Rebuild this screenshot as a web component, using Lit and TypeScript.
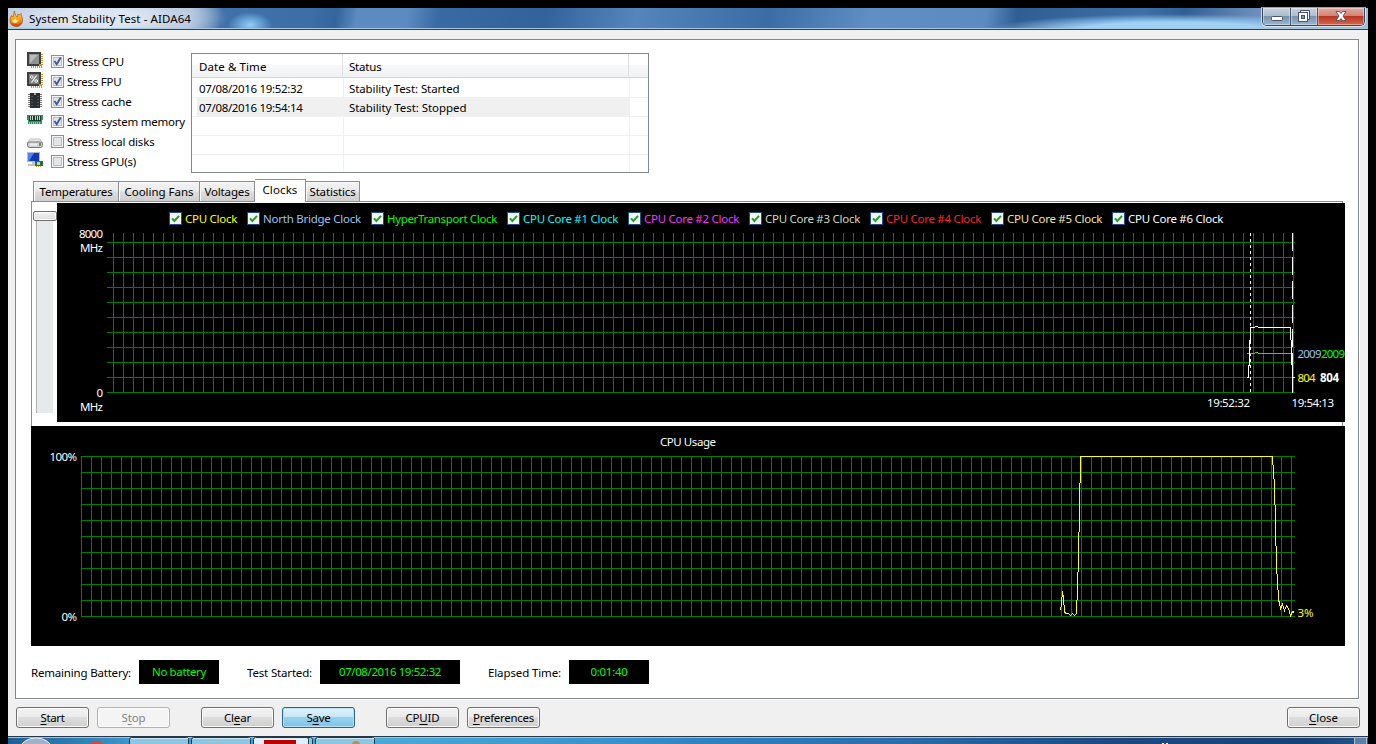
import { LitElement, html, svg, css } from "lit";
import { customElement, property } from "lit/decorators.js";

/** A single line of text whose tracking is adjusted to span an exact width. */
@customElement("ui-text")
class UiText extends LitElement {
  @property({ type: Number }) w = 0;
  @property() text = "";
  /** Index of the underlined access key, or -1. */
  @property({ type: Number }) key = -1;

  static styles = css`
    :host { display: block; flex: none; white-space: pre; line-height: 16px; height: 16px; }
    u { text-decoration: underline; text-decoration-thickness: 1px; text-underline-offset: 2px; text-decoration-skip-ink: none; }
  `;

  updated() {
    const span = this.renderRoot.querySelector("span") as HTMLElement;
    span.style.letterSpacing = "0";
    const natural = span.getBoundingClientRect().width;
    span.style.letterSpacing = `${(this.w - natural) / this.text.length}px`;
    this.style.width = `${this.w}px`;
  }

  render() {
    const { text, key } = this;
    return key < 0
      ? html`<span>${text}</span>`
      : html`<span>${text.slice(0, key)}<u>${text[key]}</u>${text.slice(key + 1)}</span>`;
  }
}

const pins = (color: string) => svg`
  <path d="M4 14.5H16M14.5 2V14" stroke=${color} stroke-width="3" stroke-dasharray="1 1" fill="none"/>`;

const icons = {
  cpu: svg`${pins("#c79436")}<rect width="14" height="14" fill="#3c3e40"/><rect x="2" y="2" width="10" height="10" fill="#8f9294"/><path d="M3 3h8L3 11z" fill="#b9bbbc"/><rect x="12" y="12" width="2" height="2" fill="#d69a2e"/>`,
  fpu: svg`${pins("#c79436")}<rect width="14" height="14" fill="#3c3e40"/><rect x="2" y="2" width="10" height="10" fill="#7c7e80"/><circle cx="4.7" cy="5" r="1.3" fill="none" stroke="#fff"/><circle cx="9.2" cy="9" r="1.3" fill="none" stroke="#fff"/><path d="M9.5 3.5L4.5 10.5" stroke="#fff" stroke-width="1.2"/><rect x="12" y="12" width="2" height="2" fill="#d69a2e"/>`,
  cache: svg`<path d="M2 2V16M14 2V16" stroke="#777" stroke-width="2" stroke-dasharray="1 1"/><rect x="3" y="1" width="10" height="15" fill="#2c2e30"/><path d="M5 4V14M11 4V14" stroke="#777" stroke-dasharray="1 2"/><path d="M7 1h2v2H7z" fill="#aaa"/>`,
  memory: svg`<path d="M0 3h16v5h-1v4H1V8H0z" fill="#2e9464"/><path d="M2 4h12v5H2z" fill="#1d3c2e"/><path d="M3.500 4V8M5.500 4V8M8.500 4V8M10.500 4V8M12.500 4V8" stroke="#c9d8ce"/><path d="M2 11H14" stroke="#e3b23c" stroke-width="2" stroke-dasharray="1 1"/>`,
  disk: svg`<path d="M3 7h10l3 4H0z" fill="#e2e4e5" stroke="#aaa" stroke-width=".6"/><rect x=".5" y="10" width="15" height="5.500" rx="2" fill="#d0d2d4" stroke="#777"/><path d="M3 12.500h7" stroke="#eee" stroke-width="2"/><rect x="12" y="11" width="2" height="3" fill="#52a52f"/>`,
  gpu: svg`<rect x=".5" y=".5" width="12" height="9" fill="#1238b4" stroke="#b5bcc6"/><path d="M1 1h6L2 9H1z" fill="#4f83ee"/><path d="M5 10h3v2h3v2H1v-2h4z" fill="#bfc3c8"/><path d="M8 9h8v5H8z" fill="#1f7048"/><path d="M10 10h3v3h-3z" fill="#bcd0c2"/><path d="M9 14.5h6" stroke="#d8b13c" stroke-dasharray="1 1"/>`,
};

const tests: [string, keyof typeof icons, boolean, number][] = [
  ["Stress CPU", "cpu", true, 57],
  ["Stress FPU", "fpu", true, 54.5],
  ["Stress cache", "cache", true, 64.5],
  ["Stress system memory", "memory", true, 118],
  ["Stress local disks", "disk", false, 87.5],
  ["Stress GPU(s)", "gpu", false, 69],
];

const series: [string, string, number][] = [
  ["CPU Clock", "#ffff00", 52],
  ["North Bridge Clock", "#99c4f5", 98],
  ["HyperTransport Clock", "#00ff00", 110],
  ["CPU Core #1 Clock", "#00ffff", 95],
  ["CPU Core #2 Clock", "#ff35ff", 95],
  ["CPU Core #3 Clock", "#c8dcc0", 95],
  ["CPU Core #4 Clock", "#ff2525", 95],
  ["CPU Core #5 Clock", "#f5e3a0", 95],
  ["CPU Core #6 Clock", "#ffffff", 95],
];

const range = (from: number, to: number, step: number) =>
  Array.from({ length: Math.floor((to - from) / step) + 1 }, (_, i) => from + i * step);

const label = (x: number, y: number, w: number, text: string, fill = "#fff", weight = 400) =>
  svg`<text x=${x} y=${y} textLength=${w} fill=${fill} font-weight=${weight}>${text}</text>`;

@customElement("clock-chart")
class ClockChart extends LitElement {
  static styles = css`
    :host { display: block; background: #000; width: 1288px; height: 219px; }
    svg { display: block; width: 1288px; height: 189px; overflow: visible; font: 11.5px "Noto Sans", sans-serif; }
    .legend { display: flex; height: 30px; padding: 1px 0 0 112px; box-sizing: border-box; align-items: center; gap: 10px; }
    .entry { display: flex; gap: 3px; align-items: center; }
    .box { width: 13px; height: 13px; overflow: visible; }
  `;

  render() {
    return html`
      <div class="legend">
        ${series.map(([name, color, w]) => html`
          <div class="entry" style="color:${color}">
            <svg class="box" viewBox="0 0 13 13">
              <rect x=".5" y=".5" width="12" height="12" fill="#f4f4f4" stroke="#1c4f86"/>
              <path d="M3 6.3L5.4 9 10 3.8" fill="none" stroke="#21a121" stroke-width="2"/>
            </svg>
            <ui-text .text=${name} .w=${w}></ui-text>
          </div>`)}
      </div>
      <svg viewBox="57 233 1288 189">
        <g fill="none" shape-rendering="crispEdges">
          <g stroke="#008000">
            ${range(113, 1293, 10).map((x) => svg`<path d="M${x + 0.5} 233V393"/>`)}
            ${range(242, 392, 15).map((y) => svg`<path d="M107 ${y + 0.5}H1295"/>`)}
          </g>
          <path d="M1250.5 233V393" stroke="#fff" stroke-dasharray="3 3"/>
          <path d="M1292.5 233V393" stroke="#fff" stroke-dasharray="18 6"/>
          <path d="M1247 353.5H1255M1255 352.5H1258M1258 353.5H1291" stroke="#00ff00"/>
          <path d="M1247 377.5H1249M1248.5 378V365M1249.5 366V340M1250.5 341V327M1250 327.5H1255M1255 326.5H1258M1258 327.5H1291M1290.5 327V340M1291.5 340V365M1292.5 362V392M1293 377.5H1295" stroke="#fff"/>
        </g>
        ${label(79, 238, 24, "8000")}
        ${label(80, 252, 23, "MHz")}
        ${label(96.5, 397, 6.5, "0")}
        ${label(80, 411, 23, "MHz")}
        ${label(1207, 407, 43, "19:52:32")}
        ${label(1291.5, 407, 42.5, "19:54:13")}
        ${label(1297.5, 358, 24, "2009", "#99c4f5")}
        ${label(1321, 358, 24, "2009", "#00ff00")}
        ${label(1297.5, 382, 18, "804", "#ffff00")}
        ${label(1320, 382, 19, "804", "#fff", 700)}
      </svg>`;
  }
}

@customElement("usage-chart")
class UsageChart extends LitElement {
  static styles = css`
    :host { display: block; background: #000; width: 1314px; height: 220px; }
    svg { display: block; font: 11.5px "Noto Sans", sans-serif; }
  `;

  render() {
    return html`
      <svg width="1314" height="220" viewBox="31 426 1314 220">
        <g fill="none" shape-rendering="crispEdges">
          <g stroke="#008000">
            ${range(81, 1291, 10).map((x) => svg`<path d="M${x + 0.5} 456V617"/>`)}
            ${range(456, 616, 16).map((y) => svg`<path d="M81 ${y + 0.5}H1295"/>`)}
          </g>
          <polyline transform="translate(.5 .5)" stroke="#ffff00" points="1060,610 1061,603 1062,591 1063,597 1064,611 1065,613 1068,613 1070,615 1072,613 1074,615 1076,613 1076,600 1077,599 1077,572 1078,571 1078,532 1079,531 1079,483 1080,482 1080,456 1272,456 1272,464 1273,465 1273,478 1274,479 1274,504 1275,505 1275,545 1276,546 1276,573 1277,574 1277,589 1278,590 1278,600 1279,602 1280,608 1282,604 1284,610 1286,605 1288,608 1290,615 1292,611 1294,612"/>
        </g>
        ${label(660, 446, 56, "CPU Usage")}
        ${label(49.5, 461, 27.5, "100%")}
        ${label(61.5, 621, 15.5, "0%")}
        ${label(1297.5, 617, 16, "3%", "#ffff00")}
      </svg>`;
  }
}

@customElement("app-root")
class AppRoot extends LitElement {
  static styles = css`
    :host { display: flex; flex-direction: column; width: 1376px; height: 744px; box-sizing: border-box; padding: 8px 8px 0; background: #000; color: #000; font: 11.5px "Noto Sans", sans-serif; overflow: hidden; }
    svg { display: block; flex: none; }
    .title { display: flex; height: 22px; box-sizing: border-box; padding-left: 1px; border-bottom: 1px solid #25435c; box-shadow: inset 0 -1px #a9c8e0;
      background:
        radial-gradient(ellipse 22px 13px at 242px 17px, #8fd0f8, transparent),
        radial-gradient(ellipse 130px 30px at 90px 10px, #dde5f2 0 30%, #c6d3e6b0 70%, transparent),
        radial-gradient(ellipse 185px 16px at 1165px 22px, #9dd1f5 50%, #9dd1f500),
        linear-gradient(100deg, #b9c9dd 0, #a8bdd8 180px, #3f71ab 212px, #3c6ea8 300px, #34659c 325px, #5b8bc0 345px, #5b8bc0 395px, #386aa5 425px, #32629b 530px, #5486bd 620px, #3a6ca5 750px, #5f8fc4 850px, #5b8bc0 965px, #2f5e93 995px, #3c70a8 1120px, #2f5f95 1160px, #6b8fbd 1230px, #a9bfdc 1350px);
    }
    .title ui-text { margin: 3px 0 0 5px; }
    .flame { margin-top: 3px; }
    .controls { display: flex; margin-left: auto; margin-right: 3px; height: 18px; border: 1px solid #36465e; border-top: 0; border-radius: 0 0 5px 5px; box-shadow: 0 0 0 1px #ffffffa0; overflow: hidden; box-sizing: border-box; }
    .control { display: flex; align-items: center; justify-content: center; box-sizing: border-box; width: 27px; border-right: 1px solid #46566e; background: linear-gradient(#c7d3df, #acbccc 47%, #7890ab 48%, #98b8d4); box-shadow: inset 0 0 0 1px #ffffff60; }
    .control.mini { width: 28px; padding-top: 3px; }
    .control.restore { padding-bottom: 2px; }
    .control.exit { width: 46px; border-right: 0; padding-bottom: 1px; background: linear-gradient(#e4aaa0, #d28072 47%, #b93322 48%, #d3694c); }
    .body { display: flex; flex-direction: column; flex: none; height: 706px; background: #f0f0f0; padding: 9px 8px 0 7px; box-sizing: border-box; }
    .panel { box-sizing: border-box; width: 1344px; height: 660px; border: 1px solid #828790; box-shadow: 1px 1px #fff; background: #fff; padding: 12px 0 0 15px; }
    .top { display: flex; height: 128px; }
    .tests { display: flex; flex-direction: column; width: 160px; box-sizing: border-box; }
    .test { display: flex; height: 20px; margin-left: -4px; }
    .check { margin: 3px 3px 0 8px; }
    .test ui-text { margin-top: 2px; }
    .log { display: grid; box-sizing: border-box; width: 458px; height: 120px; margin-top: 1px; border: 1px solid #828790; grid-template-columns: 151px 286px 19px; grid-template-rows: 24px 20px 19px 19px 19px 17px; }
    .head { border-right: 1px solid #dee0e2; border-bottom: 1px solid #d5d5d5; padding: 5px 0 0 7px; background: linear-gradient(#fff 45%, #f7f8fa 50%, #f1f2f4); }
    .head + .head { padding-left: 6px; }
    .head.last { border-right: 0; }
    .cell { border-bottom: 1px solid #f0f0f0; border-right: 1px solid #f0f0f0; padding: 2px 0 0 7px; margin-right: -1px; box-sizing: border-box; }
    .cell.status { padding-left: 6px; }
    .cell.edge { border-right: 0; margin-right: 0; }
    .cell.first { padding-top: 3px; }
    .cell.picked { background: #f0f0f0; }
    .cell.picked.date { background: linear-gradient(90deg, #fff 5px, #f0f0f0 5px); }
    .cell.bottom { border-bottom: 0; }
    .tabs { display: flex; align-items: flex-end; height: 21px; padding-left: 2px; box-sizing: border-box; }
    .tab { display: flex; justify-content: center; box-sizing: border-box; height: 20px; border: 1px solid #8c8e94; border-bottom: 0; border-left-width: 0; background: linear-gradient(#f3f3f3, #ebebeb 48%, #dddddd 52%, #cfcfcf); box-shadow: inset 1px 1px #fbfbfb; padding-top: 2px; }
    .tab:first-child { border-left-width: 1px; }
    .tab.open { height: 23px; margin-bottom: -1px; background: #fff; box-shadow: none; z-index: 1; }
    .page { display: flex; box-sizing: border-box; width: 1312px; height: 225px; border: 1px solid #8c8e94; border-bottom: 0; background: #fff; }
    .rail { width: 25px; flex: none; box-sizing: border-box; padding: 4px 0 0 1px; }
    .thumb { box-sizing: border-box; width: 24px; height: 10px; border: 1px solid #707070; border-radius: 2px; background: linear-gradient(#f5f5f5, #ddd); box-shadow: inset 0 0 0 1px #fff; }
    .above, .below { box-sizing: border-box; width: 17px; margin-left: 3px; border-left: 1px solid #b0b0b0; background: #e7eaea; }
    .above { height: 5px; background: #fff; border-color: #fff; }
    .below { height: 192px; }
    clock-chart { margin-top: 1px; flex: none; }
    .status-bar { display: flex; margin-top: 14px; height: 24px; }
    .status-bar > ui-text { margin-top: 5px; }
    .readout { display: flex; justify-content: center; height: 24px; background: #000; color: #00ff00; margin-left: 8px; margin-right: 28px; }
    .readout ui-text { margin-top: 4px; }
    .w80 { width: 80px; }
    .w140 { width: 140px; }
    .buttons { display: flex; gap: 8px; padding: 8px 0 0 1px; width: 1344px; box-sizing: content-box; }
    .button { display: flex; justify-content: center; box-sizing: border-box; width: 73px; height: 21px; border: 1px solid #707070; border-radius: 3px; background: linear-gradient(#f2f2f2, #ebebeb 48%, #dddddd 50%, #cfcfcf); box-shadow: inset 0 0 0 1px #fcfcfc; padding-top: 2px; }
    .button.off { color: #838383; border-color: #adb2b5; background: #f4f4f4; }
    .button.hot { border-color: #2c628b; background: linear-gradient(#e5f4fc, #c4e5f6 48%, #98d1ef 50%, #80c2e6); box-shadow: inset 0 0 0 1px #b9e3f5; }
    .spaced { margin-left: 23px; }
    .end { margin-left: auto; }
    .taskbar { display: flex; flex: none; height: 8px; width: 1360px; box-sizing: border-box; border-top: 1px solid #24384c; box-shadow: inset 0 1px #9cc4dd; background: linear-gradient(90deg, #1d5f94, #3c96cb 120px, #4aaad6 370px, #3790cc 620px, #2d82c2 700px, #2a6cab 900px, #1b4a82 1100px, #164274 1300px, #245587); }
    .taskbar svg { width: 1360px; height: 7px; }
  `;

  private button(text: string, key: number, w: number, extra = "") {
    return html`<div class="button ${extra}"><ui-text .text=${text} .key=${key} .w=${w}></ui-text></div>`;
  }

  private row(date: string, status: string, w: number, extra = "") {
    return html`
      <div class="cell date ${extra}">${date ? html`<ui-text .text=${date} .w=${103.5}></ui-text>` : ""}</div>
      <div class="cell status ${extra}">${status ? html`<ui-text .text=${status} .w=${w}></ui-text>` : ""}</div>
      <div class="cell edge ${extra === "picked" ? "" : extra}"></div>`;
  }

  render() {
    return html`
      <div class="title">
        <svg class="flame" width="15" height="16" viewBox="0 0 15 16">
          <defs><linearGradient id="fire" x2="0" y2="1"><stop stop-color="#ffd84a"/><stop offset=".5" stop-color="#ff9d1c"/><stop offset="1" stop-color="#e2590d"/></linearGradient></defs>
          <path d="M5 0C6 2 6 4 8 6c1-1 1-2 .6-3C10 4 11 4 12 2.5 12 5 14 7 13.6 10 13 13.5 10 16 7 15.5 3 15 1 12.500 1 9c0-2 1-3 1.500-4.500L3.500 6C5 4 5 2 5 0z" fill="url(#fire)" stroke="#9a5a20" stroke-width=".7"/>
          <path d="M3.500 8c1 2 2 1 3-1 1 2 1 3 3 2-1 3-3 4-6 2z" fill="#fff08a"/>
          <path d="M1 11c2 3 8 3 12 0-1 3-3 4.500-6 4.500S2 14 1 11z" fill="#c9530e"/>
        </svg>
        <ui-text .text=${"System Stability Test - AIDA64"} .w=${162}></ui-text>
        <div class="controls">
          <div class="control mini"><svg width="12" height="5" viewBox="0 0 12 5"><rect x=".5" y=".5" width="11" height="4" rx="1" fill="#fff" stroke="#4a5468"/></svg></div>
          <div class="control restore"><svg width="12" height="12" viewBox="0 0 12 12"><path d="M2.500 2V.5h9v9H10" fill="#eee" stroke="#4a5468"/><rect x=".5" y="2.500" width="9" height="9" fill="#fff" stroke="#4a5468"/><rect x="3.500" y="5.500" width="3" height="3" fill="#8098b4" stroke="#4a5468"/></svg></div>
          <div class="control exit"><svg width="12" height="10" viewBox="0 0 12 10"><path d="M1 .5h3.500L6 2.500 7.500.5H11L8 5l3 4.500H7.500L6 7.500 4.500 9.500H1L4 5z" fill="#fff" stroke="#554c5c" stroke-width=".9"/></svg></div>
        </div>
      </div>
      <div class="body">
        <div class="panel">
          <div class="top">
            <div class="tests">
              ${tests.map(([name, icon, on, w]) => html`
                <div class="test">
                  <svg width="16" height="16" viewBox="0 0 16 16">${icons[icon]}</svg>
                  <svg class="check" width="13" height="13" viewBox="0 0 13 13">
                    <rect x=".5" y=".5" width="12" height="12" fill="#f4f4f4" stroke="#8e8f8f"/>
                    <rect x="2.500" y="2.500" width="8" height="8" fill="#e3e6e9" stroke="#b9bfc6"/>
                    ${on ? svg`<path d="M3.500 6l2.200 3.300L9.700 2.500" fill="none" stroke="#4358a0" stroke-width="1.900"/>` : ""}
                  </svg>
                  <ui-text .text=${name} .w=${w}></ui-text>
                </div>`)}
            </div>
            <div class="log">
              <div class="head"><ui-text .text=${"Date & Time"} .w=${67.5}></ui-text></div>
              <div class="head"><ui-text .text=${"Status"} .w=${32.5}></ui-text></div>
              <div class="head last"></div>
              ${this.row("07/08/2016 19:52:32", "Stability Test: Started", 110.5, "first")}
              ${this.row("07/08/2016 19:54:14", "Stability Test: Stopped", 117.5, "picked")}
              ${this.row("", "", 0)}
              ${this.row("", "", 0)}
              ${this.row("", "", 0, "bottom")}
            </div>
          </div>
          <div class="tabs">
            <div class="tab" style="width:86px"><ui-text .text=${"Temperatures"} .w=${73}></ui-text></div>
            <div class="tab" style="width:81px"><ui-text .text=${"Cooling Fans"} .w=${69}></ui-text></div>
            <div class="tab" style="width:55px"><ui-text .text=${"Voltages"} .w=${45}></ui-text></div>
            <div class="tab open" style="width:51px"><ui-text .text=${"Clocks"} .w=${35}></ui-text></div>
            <div class="tab" style="width:54px"><ui-text .text=${"Statistics"} .w=${46}></ui-text></div>
          </div>
          <div class="page">
            <div class="rail"><div class="above"></div><div class="thumb"></div><div class="below"></div></div>
            <clock-chart></clock-chart>
          </div>
          <usage-chart></usage-chart>
          <div class="status-bar">
            <ui-text .text=${"Remaining Battery:"} .w=${100}></ui-text>
            <div class="readout w80"><ui-text .text=${"No battery"} .w=${54}></ui-text></div>
            <ui-text .text=${"Test Started:"} .w=${65}></ui-text>
            <div class="readout w140"><ui-text .text=${"07/08/2016 19:52:32"} .w=${102}></ui-text></div>
            <ui-text .text=${"Elapsed Time:"} .w=${73}></ui-text>
            <div class="readout w80"><ui-text .text=${"0:01:40"} .w=${37}></ui-text></div>
          </div>
        </div>
        <div class="buttons">
          ${this.button("Start", 0, 24)}
          ${this.button("Stop", 1, 24, "off")}
          ${this.button("Clear", 2, 27, "spaced")}
          ${this.button("Save", 1, 24, "hot")}
          ${this.button("CPUID", 2, 34, "spaced")}
          ${this.button("Preferences", 0, 61)}
          ${this.button("Close", 0, 29, "end")}
        </div>
      </div>
      <div class="taskbar">
        <svg viewBox="8 737 1360 7">
          <ellipse cx="36" cy="749" rx="16" ry="11" fill="#9fb2c9" stroke="#e0eaf2"/>
          <circle cx="97" cy="751" r="10" fill="#d8463c"/>
          <g fill="#8cc6e0" stroke="#17384c">
            <rect x="129.500" y="737.500" width="59" height="12" rx="2"/>
            <rect x="191.500" y="737.500" width="59" height="12" rx="2"/>
            <rect x="257.500" y="737.500" width="55" height="12" rx="2"/>
            <rect x="253.500" y="737.500" width="55" height="12" rx="2" fill="#e0f0f8"/>
            <rect x="315.500" y="737.500" width="59" height="12" rx="2"/>
          </g>
          <path d="M131 738.500H188M193 738.500H250M317 738.500H374" stroke="#cfe9f4"/>
          <path d="M207 743h14v2h-14z" fill="#c9b87c"/>
          <path d="M264 740h32v5h-32z" fill="#b80000"/>
          <circle cx="356" cy="745" r="4" fill="#c58a5a"/>
          <path d="M1162 743h2v1h-2zM1166 743h2v1h-2z" fill="#fff"/>
          <rect x="1354.500" y="737.500" width="12" height="12" fill="#5b7fa5" stroke="#a9bfd3"/>
        </svg>
      </div>`;
  }
}
